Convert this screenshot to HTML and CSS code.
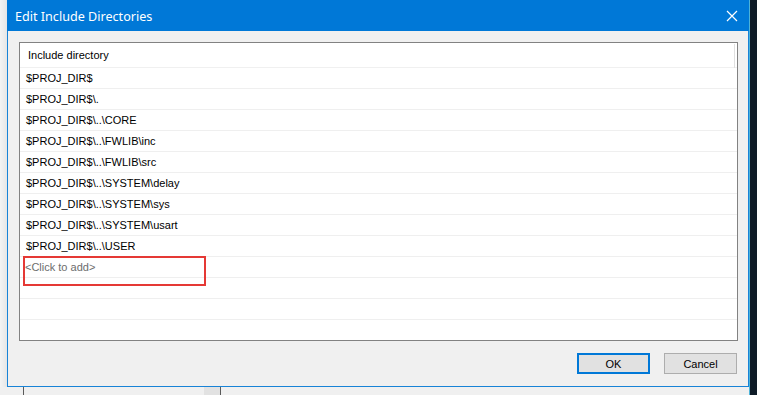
FILE: index.html
```html
<!DOCTYPE html>
<html lang="en">
<head>
    <meta charset="UTF-8">
    <meta name="viewport" content="width=device-width, initial-scale=1.0">
    <title>Edit Include Directories</title>
    <link rel="stylesheet" href="styles.css">
</head>
<body>
    <div class="screen">
        <div class="main-col">
            <div class="top-row">
                <div class="left-strip"></div>
                <div class="dialog">
                    <div class="title-bar">
                        <span class="title">Edit Include Directories</span>
                        <span class="close-btn">
                            <svg width="12" height="12" viewBox="0 0 12 12">
                                <path d="M1 1 L11 11 M11 1 L1 11" stroke="#fff" stroke-width="1.2" fill="none"/>
                            </svg>
                        </span>
                    </div>
                    <div class="dialog-body">
                        <div class="list-box">
                            <div class="list-header">Include directory</div>
                            <div class="list-row">$PROJ_DIR$</div>
                            <div class="list-row">$PROJ_DIR$\.</div>
                            <div class="list-row">$PROJ_DIR$\..\CORE</div>
                            <div class="list-row">$PROJ_DIR$\..\FWLIB\inc</div>
                            <div class="list-row">$PROJ_DIR$\..\FWLIB\src</div>
                            <div class="list-row">$PROJ_DIR$\..\SYSTEM\delay</div>
                            <div class="list-row">$PROJ_DIR$\..\SYSTEM\sys</div>
                            <div class="list-row">$PROJ_DIR$\..\SYSTEM\usart</div>
                            <div class="list-row">$PROJ_DIR$\..\USER</div>
                            <div class="list-row add-row">&lt;Click to add&gt;<span class="highlight"></span></div>
                            <div class="list-row"></div>
                            <div class="list-row"></div>
                            <div class="list-row"></div>
                        </div>
                        <div class="button-row">
                            <button type="button" class="btn btn-default">OK</button>
                            <button type="button" class="btn">Cancel</button>
                        </div>
                    </div>
                </div>
            </div>
            <div class="bottom-strip">
                <div class="behind-pane"></div>
                <div class="behind-scroll"></div>
                <div class="behind-pane wide"></div>
            </div>
        </div>
        <div class="right-strip"></div>
    </div>
</body>
</html>
```

FILE: styles.css
```css
body {
    margin: 0;
    padding: 0;
    font-family: "Liberation Sans", Arial, sans-serif;
    font-size: 11px;
    color: #000;
    background-color: #f0f0f0;
    overflow: hidden;
}
.screen {
    display: flex;
    width: 757px;
    height: 395px;
}
.main-col {
    display: flex;
    flex-direction: column;
    width: 749px;
}
.top-row {
    display: flex;
    height: 387px;
}
.left-strip {
    width: 7px;
    background: linear-gradient(to right, #f4f4f4, #e6e6e6);
}
.dialog {
    width: 740px;
    display: flex;
    flex-direction: column;
    background-color: #f0f0f0;
    border: 1px solid #1883d7;
    border-top: none;
}
.title-bar {
    height: 31px;
    background-color: #0078d7;
    display: flex;
    align-items: center;
    justify-content: space-between;
    padding: 0 11px 0 8px;
    margin: 0 -1px;
}
.title {
    color: #fff;
    font-family: "Noto Sans", "Open Sans", sans-serif;
    font-size: 12.6px;
    padding-top: 1px;
}
.close-btn {
    display: flex;
    padding-top: 1px;
}
.dialog-body {
    flex: 1;
    display: flex;
    flex-direction: column;
    padding: 11px 10px 12px 11px;
}
.list-box {
    background-color: #fff;
    border: 1px solid #828282;
    height: 297px;
    overflow: hidden;
    position: relative;
}
.list-box::after {
    content: "";
    position: absolute;
    right: 2px;
    top: 1px;
    width: 1px;
    height: 24px;
    background-color: #e0e0e0;
}
.list-header {
    height: 24px;
    line-height: 25px;
    padding-left: 8px;
    border-bottom: 1px solid #f0f0f0;
}
.list-row {
    height: 20px;
    line-height: 21px;
    padding-left: 6px;
    border-bottom: 1px solid #efefef;
    white-space: nowrap;
}
.add-row {
    position: relative;
    color: #6d6d6d;
    padding-left: 5px;
}
.highlight {
    position: absolute;
    left: 3px;
    top: -1px;
    width: 179px;
    height: 26px;
    border: 2px solid #e53935;
}
.button-row {
    display: flex;
    justify-content: flex-end;
    gap: 14px;
    margin-top: 12px;
    padding-right: 1px;
}
.btn {
    width: 73px;
    height: 21px;
    font-family: "Liberation Sans", Arial, sans-serif;
    font-size: 11px;
    color: #000;
    background-color: #e1e1e1;
    border: 1px solid #adadad;
    padding: 0;
}
.btn-default {
    border: 2px solid #0078d7;
}
.bottom-strip {
    flex: 1;
    display: flex;
    background-color: #f0f0f0;
    padding-left: 23px;
}
.behind-pane {
    width: 180px;
    border-left: 1px solid #5a5a5a;
}
.behind-scroll {
    width: 16px;
    background-color: #e2e2e2;
}
.behind-pane.wide {
    flex: 1;
}
.right-strip {
    width: 8px;
    background-color: #0e1b27;
    border-left: 1px solid #4cb3d9;
}
```
